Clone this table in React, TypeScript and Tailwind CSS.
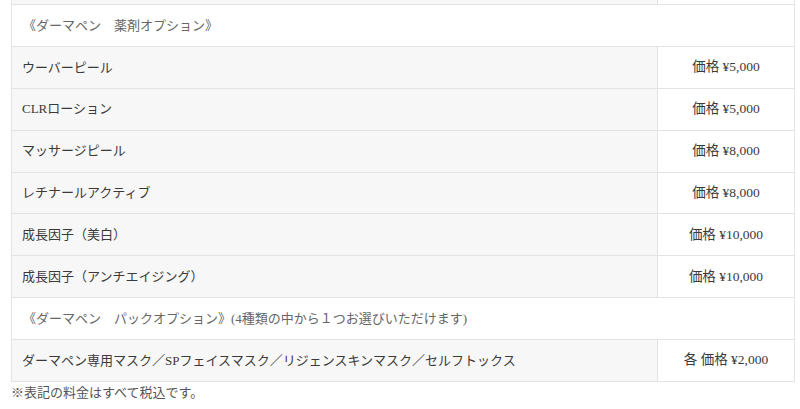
import React from "react";

/* ===============================
   DATA
================================ */
type Item = { name: string; price: string };

const drugOptions: Item[] = [
  { name: "ウーバーピール", price: "価格 ¥5,000" },
  { name: "CLRローション", price: "価格 ¥5,000" },
  { name: "マッサージピール", price: "価格 ¥8,000" },
  { name: "レチナールアクティブ", price: "価格 ¥8,000" },
  { name: "成長因子（美白）", price: "価格 ¥10,000" },
  { name: "成長因子（アンチエイジング）", price: "価格 ¥10,000" },
];

const packOptions: Item[] = [
  {
    name: "ダーマペン専用マスク／SPフェイスマスク／リジェンスキンマスク／セルフトックス",
    price: "各 価格 ¥2,000",
  },
];

/* ===============================
   PAGE
================================ */
export default function App() {
  return (
    <div
      className="w-[800px] h-[409px] overflow-hidden bg-white text-[13px] text-[#3a3a3a]"
      style={{ fontFamily: '"Liberation Serif", "Noto Sans CJK JP", serif' }}
    >
      <div className="ml-[11px] w-[784px] border-x border-[#e3e3e3]">
        {/* cut-off row above */}
        <div className="flex h-[5px] border-b border-[#e3e3e3]">
          <div className="flex-1 bg-[#f7f7f7]" />
          <div className="w-[137px] border-l border-[#e3e3e3] bg-white" />
        </div>

        <Heading>《ダーマペン　薬剤オプション》</Heading>
        {drugOptions.map((it) => (
          <Row key={it.name} item={it} />
        ))}

        <Heading>
          《ダーマペン　パックオプション》(4種類の中から１つお選びいただけます)
        </Heading>
        {packOptions.map((it) => (
          <Row key={it.name} item={it} />
        ))}
      </div>

      <p className="ml-[11px] leading-[22px] text-[#555]">※表記の料金はすべて税込です。</p>
    </div>
  );
}

/* ===============================
   HELPERS
================================ */
function Heading({ children }: { children: React.ReactNode }) {
  return (
    <div className="h-[41.9px] flex items-center px-[11px] border-b border-[#e3e3e3] bg-white text-[#666]">
      {children}
    </div>
  );
}

function Row({ item }: { item: Item }) {
  return (
    <div className="flex h-[41.9px] border-b border-[#e3e3e3]">
      <div className="flex-1 flex items-center px-[10px] bg-[#f7f7f7]">{item.name}</div>
      <div className="w-[137px] flex items-center justify-center border-l border-[#e3e3e3] bg-white text-[13.5px]">
        {item.price}
      </div>
    </div>
  );
}
